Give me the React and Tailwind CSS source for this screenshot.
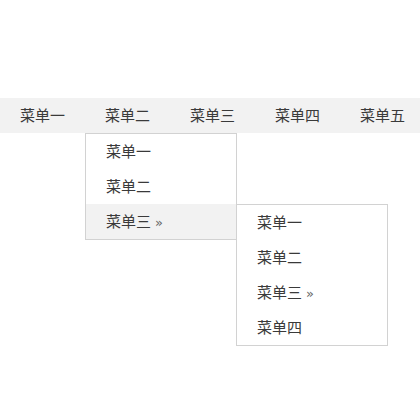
import React from "react"

const font = { fontFamily: '"Noto Sans CJK SC", "Noto Sans", sans-serif' }

const navItems = ["菜单一", "菜单二", "菜单三", "菜单四", "菜单五"]

const Item = ({ label, more, active, children }) => (
  <li className={`relative h-[35px] leading-[33px] pl-5 ${active ? "bg-[#f2f2f2]" : ""}`}>
    {label}
    {more && <span className="ml-1 text-[13px] text-[#666]" style={{ fontFamily: '"DejaVu Sans", sans-serif' }}>»</span>}
    {children}
  </li>
)

const App = () => {
  return (
    <div className="w-[420px] h-[420px] bg-white overflow-hidden text-[15px] text-[#3a3a3a]" style={font}>
      <ul className="mt-[98px] flex h-[35px] bg-[#f2f2f2]">
        {navItems.map((item, i) => (
          <li key={i} className="relative w-[85px] shrink-0 h-[35px] text-center leading-[33px]">
            {item}
            {i === 1 && (
              <ul className="absolute top-full left-0 w-[152px] border border-[#d2d2d2] bg-white text-left">
                <Item label="菜单一" />
                <Item label="菜单二" />
                <Item label="菜单三" more active>
                  <ul className="absolute top-0 left-full w-[152px] border border-[#d2d2d2] bg-white">
                    <Item label="菜单一" />
                    <Item label="菜单二" />
                    <Item label="菜单三" more />
                    <Item label="菜单四" />
                  </ul>
                </Item>
              </ul>
            )}
          </li>
        ))}
      </ul>
    </div>
  )
}

export default App
